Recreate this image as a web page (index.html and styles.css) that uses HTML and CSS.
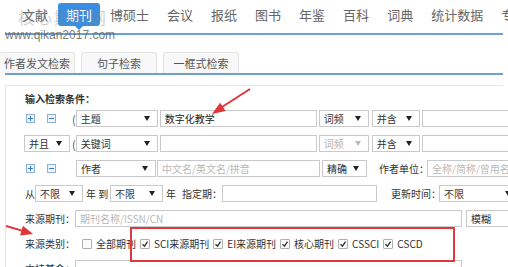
FILE: index.html
```html
<!DOCTYPE html>
<html lang="zh-CN">
<head>
  <meta charset="UTF-8">
  <title>期刊检索</title>
  <link rel="stylesheet" href="styles.css">
</head>
<body>

  <div class="nav">
    <a>文献</a>
    <a class="on">期刊</a>
    <a>博硕士</a>
    <a>会议</a>
    <a>报纸</a>
    <a>图书</a>
    <a>年鉴</a>
    <a>百科</a>
    <a>词典</a>
    <a>统计数据</a>
    <a>专利</a>
  </div>

  <div class="tabs">
    <span class="tab">作者发文检索</span>
    <span class="tab">句子检索</span>
    <span class="tab">一框式检索</span>
  </div>

  <div class="panel">
    <div class="title">输入检索条件：</div>

    <div class="row">
      <span class="pm"><svg width="9" height="9"><rect x=".5" y=".5" width="8" height="8" fill="#eef4fb" stroke="#8db0d8"/><path d="M2 4.5h5M4.5 2v5" stroke="#3f7dc1"/></svg></span>
      <span class="pm minus"><svg width="9" height="9"><rect x=".5" y=".5" width="8" height="8" fill="#eef4fb" stroke="#8db0d8"/><path d="M2 4.5h5" stroke="#3f7dc1"/></svg></span>
      <span class="paren">(</span>
      <span class="sel w82">主题<i></i></span>
      <span class="inp w157 val">数字化教学</span>
      <span class="sel w50 ml2">词频<i></i></span>
      <span class="sel w48 ml3">并含<i></i></span>
      <span class="inp w100 ml2"></span>
    </div>

    <div class="row">
      <span class="sel w46 first">并且<i></i></span>
      <span class="paren">(</span>
      <span class="sel w82">关键词<i></i></span>
      <span class="inp w157"></span>
      <span class="sel w50 ml2 off">词频<i></i></span>
      <span class="sel w48 ml3">并含<i></i></span>
      <span class="inp w100 ml2"></span>
    </div>

    <div class="row">
      <span class="pm"><svg width="9" height="9"><rect x=".5" y=".5" width="8" height="8" fill="#eef4fb" stroke="#8db0d8"/><path d="M2 4.5h5M4.5 2v5" stroke="#3f7dc1"/></svg></span>
      <span class="pm minus"><svg width="9" height="9"><rect x=".5" y=".5" width="8" height="8" fill="#eef4fb" stroke="#8db0d8"/><path d="M2 4.5h5" stroke="#3f7dc1"/></svg></span>
      <span class="sel w80 ml20">作者<i></i></span>
      <span class="inp w163 ml1 ph">中文名/英文名/拼音</span>
      <span class="sel w45 ml2">精确<i></i></span>
      <span class="lbl unit">作者单位：</span>
      <span class="inp w100 ph">全称/简称/曾用名</span>
    </div>

    <div class="row">
      <span class="lbl w10">从</span>
      <span class="sel w48">不限<i></i></span>
      <span class="lbl w24 ml3">年 到</span>
      <span class="sel w53">不限<i></i></span>
      <span class="lbl w16 ml3">年</span>
      <span class="lbl w40">指定期：</span>
      <span class="inp w155"></span>
      <span class="lbl w48 ml14">更新时间：</span>
      <span class="sel w80">不限<i></i></span>
    </div>

    <div class="row">
      <span class="lbl w50">来源期刊：</span>
      <span class="inp w387 ph">期刊名称/ISSN/CN</span>
      <span class="sel w60 ml4">模糊<i></i></span>
    </div>

    <div class="row">
      <span class="lbl w50">来源类别：</span>
      <div class="checks">
        <label class="chk"><span class="box"></span>全部期刊</label>
        <label class="chk"><span class="box"><svg width="8" height="8"><path d="M1.5 4.2l2 2 3-4.5" fill="none" stroke="#333" stroke-width="1.3"/></svg></span>SCI来源期刊</label>
        <label class="chk"><span class="box"><svg width="8" height="8"><path d="M1.5 4.2l2 2 3-4.5" fill="none" stroke="#333" stroke-width="1.3"/></svg></span>EI来源期刊</label>
        <label class="chk"><span class="box"><svg width="8" height="8"><path d="M1.5 4.2l2 2 3-4.5" fill="none" stroke="#333" stroke-width="1.3"/></svg></span>核心期刊</label>
        <label class="chk"><span class="box"><svg width="8" height="8"><path d="M1.5 4.2l2 2 3-4.5" fill="none" stroke="#333" stroke-width="1.3"/></svg></span>CSSCI</label>
        <label class="chk"><span class="box"><svg width="8" height="8"><path d="M1.5 4.2l2 2 3-4.5" fill="none" stroke="#333" stroke-width="1.3"/></svg></span>CSCD</label>
      </div>
    </div>

    <div class="row">
      <span class="lbl w50">支持基金：</span>
      <span class="inp w387"></span>
    </div>
  </div>

  <!-- annotations drawn over the screenshot -->
  <div class="mark-box"></div>
  <svg class="arrows" width="508" height="267">
    <path d="M250 89 L222 107" stroke="#e0353b" stroke-width="2"/>
    <polygon points="212,114 225.6,111.1 220.1,102.7" fill="#e0353b"/>
    <path d="M6 226 L22 230.6" stroke="#e0353b" stroke-width="2"/>
    <polygon points="33,234 20.1,235.4 22.9,225.8" fill="#e0353b"/>
  </svg>

  <div class="watermark">
    <div class="wm-name">核心期刊网</div>
    <div class="wm-url">www.qikan2017.com</div>
  </div>

</body>
</html>
```

FILE: styles.css
```css
body {
  margin: 0;
  width: 508px;
  height: 267px;
  overflow: hidden;
  position: relative;
  background: #fff;
  font-family: "Noto Sans CJK SC", "Liberation Sans", sans-serif;
  color: #333;
}

/* top channel nav */
.nav {
  display: flex;
  gap: 2px;
  height: 33px;
  margin: 0 5px;
  padding-left: 9px;
  border-bottom: 2px solid #6d9fcf;
  white-space: nowrap;
}

.nav a {
  position: relative;
  margin-top: 3px;
  height: 23px;
  line-height: 23px;
  padding: 0 8px;
  font-size: 13px;
  color: #666;
  border-radius: 3px;
}

.nav a.on {
  background: #3b8edf;
  color: #fff;
}

.nav a.on::after {
  content: "";
  position: absolute;
  left: 50%;
  bottom: -4px;
  margin-left: -4px;
  border-left: 4px solid transparent;
  border-right: 4px solid transparent;
  border-top: 4px solid #3b8edf;
}

/* search type tabs */
.tabs {
  display: flex;
  gap: 6px;
  margin: 17px 5px 0;
  border-bottom: 2px solid #6d9fcf;
}

.tab {
  box-sizing: border-box;
  width: 76px;
  height: 21px;
  line-height: 20px;
  text-align: center;
  font-size: 11px;
  color: #555;
  background: #f8f8f8;
  border: 1px solid #e4e4e4;
  border-bottom: none;
  border-radius: 3px 3px 0 0;
}

.tab:first-child {
  margin-left: -6px;
}

/* form panel */
.panel {
  margin: 10px 5px 0;
  border: 1px solid #e6e6e6;
  border-right: none;
  padding: 6px 0 0 19px;
  font-size: 10px;
}

.title {
  height: 14px;
  line-height: 14px;
  font-weight: bold;
  color: #333;
}

.row {
  display: flex;
  align-items: center;
  height: 25px;
  white-space: nowrap;
}

.pm {
  display: flex;
  width: 9px;
  height: 9px;
  margin-left: 1px;
}

.pm.minus {
  margin-left: 12px;
}

.paren {
  width: 10px;
  margin-left: 15px;
  padding-left: 1px;
  box-sizing: border-box;
  color: #555;
  font-size: 11px;
}

.first + .paren {
  margin-left: 1px;
}

.first {
  margin-left: -1px;
}

.sel,
.inp {
  box-sizing: border-box;
  flex: none;
  height: 17px;
  line-height: 15px;
  border: 1px solid #c9c9c9;
  background: #fff;
  padding: 0 4px;
  color: #333;
  overflow: hidden;
}

.sel {
  display: flex;
  justify-content: space-between;
  align-items: center;
  padding-right: 7px;
}

.sel i {
  width: 0;
  height: 0;
  border-left: 3px solid transparent;
  border-right: 3px solid transparent;
  border-top: 5px solid #222;
}

.sel.off {
  color: #b5b5b5;
}

.sel.off i {
  border-top-color: #bbb;
}

.inp.ph {
  color: #b8b8b8;
}

.inp.val {
  margin-left: 2px;
  color: #222;
}

.lbl {
  flex: none;
  color: #333;
}

.lbl.unit {
  width: 48px;
  margin-left: 12px;
}

.w10 { width: 10px; }
.w16 { width: 16px; }
.w24 { width: 24px; }
.w40 { width: 40px; }
.w45 { width: 45px; }
.w46 { width: 46px; }
.w48 { width: 48px; }
.w50 { width: 50px; }
.w53 { width: 53px; }
.w60 { width: 60px; }
.w80 { width: 80px; }
.w82 { width: 82px; }
.w100 { width: 100px; }
.w155 { width: 155px; }
.w157 { width: 157px; }
.w163 { width: 163px; }
.w387 { width: 387px; }

.ml1 { margin-left: 1px; }
.ml2 { margin-left: 2px; }
.ml3 { margin-left: 3px; }
.ml4 { margin-left: 4px; }
.ml14 { margin-left: 14px; }
.ml20 { margin-left: 20px; }

.row .w157:not(.val) {
  margin-left: 2px;
}

/* source category checkboxes */
.checks {
  display: flex;
  gap: 4px;
  margin-left: 7px;
}

.chk {
  display: flex;
  align-items: center;
  color: #333;
}

.box {
  box-sizing: border-box;
  display: flex;
  align-items: center;
  justify-content: center;
  width: 10px;
  height: 10px;
  margin-right: 4px;
  border: 1px solid #b0b0b0;
  border-radius: 1px;
  background: #fbfbfb;
}

/* red annotation */
.mark-box {
  position: absolute;
  left: 130px;
  top: 227px;
  width: 325px;
  height: 35px;
  box-sizing: border-box;
  border: 2px solid #dc3a40;
}

.arrows {
  position: absolute;
  left: 0;
  top: 0;
  pointer-events: none;
}

.watermark {
  position: absolute;
  left: 5px;
  top: 8px;
  pointer-events: none;
}

.wm-name {
  margin-left: 13px;
  font-size: 16px;
  line-height: 18px;
  letter-spacing: 2px;
  color: rgba(130, 130, 130, 0.4);
}

.wm-url {
  margin-top: 2px;
  font-family: "Liberation Sans", sans-serif;
  font-size: 12px;
  line-height: 14px;
  color: rgba(90, 90, 90, 0.8);
}
```
